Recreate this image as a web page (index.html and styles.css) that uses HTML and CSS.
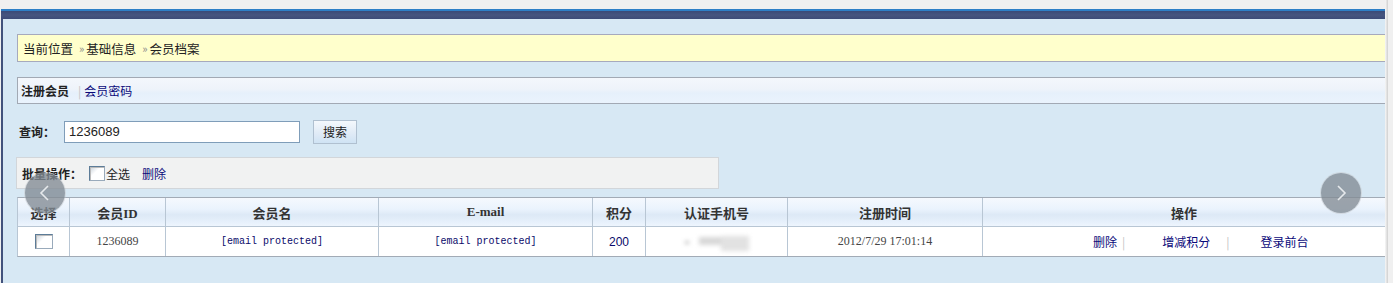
FILE: index.html
```html
<!DOCTYPE html>
<html lang="zh">
<head>
<meta charset="utf-8">
<title>会员档案</title>
<link rel="stylesheet" href="styles.css">
</head>
<body>
<div class="frame">
  <div class="topline"></div>
  <div class="topband"></div>
  <div class="main">
    <div class="crumb"><span>当前位置</span><span class="sep">»</span><span>基础信息</span><span class="sep">»</span><span>会员档案</span></div>
    <div class="tabs"><b>注册会员</b><span class="bar">|</span><a class="link">会员密码</a></div>
    <div class="search">
      <b class="lbl">查询：</b>
      <div class="input">1236089</div>
      <div class="btn">搜索</div>
    </div>
    <div class="batch">
      <b>批量操作：</b><span class="chk"></span><span class="all">全选</span><a class="link del">删除</a>
    </div>
    <div class="table">
      <div class="row head">
        <div class="c c1">选择</div>
        <div class="c c2">会员ID</div>
        <div class="c c3">会员名</div>
        <div class="c c4">E-mail</div>
        <div class="c c5">积分</div>
        <div class="c c6">认证手机号</div>
        <div class="c c7">注册时间</div>
        <div class="c c8">操作</div>
      </div>
      <div class="row body">
        <div class="c c1"><span class="chk small"></span></div>
        <div class="c c2 serif">1236089</div>
        <div class="c c3 mono">[email protected]</div>
        <div class="c c4 mono">[email protected]</div>
        <div class="c c5 num">200</div>
        <div class="c c6"><span class="blur"><i class="b1"></i><i class="b2"></i><i class="b3"></i></span></div>
        <div class="c c7 serif">2012/7/29 17:01:14</div>
        <div class="c c8 ops"><a class="link">删除</a><span class="bar">|</span><a class="link op2">增减积分</a><span class="bar b2">|</span><a class="link op3">登录前台</a></div>
      </div>
    </div>
    <div class="nav prev"><svg width="16" height="16" viewBox="0 0 16 16"><path d="M11 1 L4 8 L11 15" fill="none" stroke="#e6e9ec" stroke-width="1.6"/></svg></div>
    <div class="nav next"><svg width="16" height="16" viewBox="0 0 16 16"><path d="M5 1 L12 8 L5 15" fill="none" stroke="#e6e9ec" stroke-width="1.6"/></svg></div>
  </div>
</div>
<div class="edge"></div>
</body>
</html>
```
FILE: styles.css
```css
html, body {
  margin: 0;
  padding: 0;
  background: #f0f0f0;
  height: 283px;
  overflow: hidden;
}
body {
  position: relative;
  font-family: "Noto Sans CJK SC", "Liberation Sans", sans-serif;
  font-size: 12px;
  color: #222;
}
.frame {
  margin-top: 9px;
  margin-left: 1px;
  width: 1384px;
}
.topline {
  height: 2px;
  background: #2e7fc6;
}
.topband {
  height: 8px;
  background: linear-gradient(#3a4a78, #46557f 50%, #3c4b78);
}
.main {
  position: relative;
  height: 264px;
  border-left: 2px solid #42527c;
  background: #d7e8f4;
  padding: 15px 0 0 14px;
  box-sizing: border-box;
}
.crumb {
  height: 26px;
  border: 1px solid #a6a9bd;
  border-right: none;
  background: #ffffcc;
  display: flex;
  align-items: center;
  padding-left: 5px;
  font-size: 12.5px;
  color: #222;
}
.sep {
  color: #888;
  font-size: 11px;
  margin: 0 2px 0 6px;
}
.tabs {
  margin-top: 15px;
  height: 25px;
  border: 1px solid #a2a9b4;
  border-right: none;
  background: linear-gradient(#f4f7fc 0%, #eef3fa 45%, #e6f0fb 60%, #eaf3fd 100%);
  display: flex;
  align-items: center;
  padding-left: 3px;
}
.tabs b { color: #222; }
.tabs .bar {
  color: #c4c4c4;
  margin: 0 3px 0 9px;
}
.link {
  color: #0a0a7a;
  text-decoration: none;
}
.search {
  margin-top: 16px;
  display: flex;
  align-items: center;
  height: 23px;
}
.lbl {
  margin-left: 2px;
  width: 45px;
  color: #222;
}
.input {
  width: 230px;
  height: 20px;
  border: 1px solid #7f9db9;
  background: #fff;
  font-family: "Liberation Sans", sans-serif;
  font-size: 13px;
  line-height: 20px;
  padding-left: 4px;
  color: #222;
}
.btn {
  margin-left: 13px;
  width: 42px;
  height: 22px;
  border: 1px solid #b0c0d0;
  background: linear-gradient(#f4f8fc, #dfeaf6 60%, #cfe3f4);
  display: flex;
  align-items: center;
  justify-content: center;
  color: #222;
}
.batch {
  margin-top: 14px;
  margin-left: -1px;
  width: 696px;
  height: 30px;
  border: 1px solid #d2d6da;
  background: #f1f2f2;
  display: flex;
  align-items: center;
  padding-left: 5px;
}
.batch b { color: #222; }
.chk {
  display: inline-block;
  width: 14px;
  height: 13px;
  border: 1px solid #5c7c98;
  border-right-color: #9ab;
  border-bottom-color: #9ab;
  background: linear-gradient(135deg, #c8d0d8 0, #fff 40%);
  box-shadow: inset 1px 1px 0 #bbb;
  margin-left: 7px;
}
.all { margin-left: 1px; }
.del { margin-left: 12px; }
.table {
  margin-top: 8px;
  border-top: 1px solid #a2abb6;
  border-bottom: 1px solid #a2abb6;
  border-left: 1px solid #b8c6d4;
}
.row {
  display: flex;
}
.row.head {
  height: 28px;
  background: linear-gradient(#f5f9fe 0%, #eaf3fd 40%, #dde9f6 60%, #e6f0fb 85%, #eef5fd 100%);
  border-bottom: 1px solid #b8c6d4;
  font-weight: bold;
  font-family: "Liberation Serif", "Noto Sans CJK SC", serif;
  font-size: 13px;
  color: #333;
}
.row.body {
  height: 29px;
  background: #fff;
}
.c {
  display: flex;
  align-items: center;
  justify-content: center;
  border-right: 1px solid #b8c6d4;
  box-sizing: border-box;
}
.c1 { width: 52px; }
.c2 { width: 96px; }
.c3 { width: 213px; }
.c4 { width: 214px; }
.c5 { width: 53px; }
.c6 { width: 142px; }
.c7 { width: 195px; }
.c8 { flex: 1; border-right: none; }
.chk.small {
  margin: 0;
  width: 16px;
  height: 13px;
}
.serif {
  font-family: "Liberation Serif", serif;
  font-size: 12px;
  color: #444;
}
.mono {
  font-family: "Liberation Mono", monospace;
  font-size: 10px;
  color: #0a0a6a;
}
.num {
  font-family: "Liberation Sans", sans-serif;
  font-size: 12px;
  color: #0a0a6a;
}
.blur {
  position: relative;
  width: 84px;
  height: 22px;
  filter: blur(2px);
}
.blur i {
  position: absolute;
}
.blur .b1 { left: 10px; top: 10px; width: 4px; height: 3px; background: #bdbdbd; }
.blur .b2 { left: 24px; top: 6px; width: 24px; height: 8px; background: #d8d8d8; }
.blur .b3 { left: 46px; top: 5px; width: 28px; height: 15px; background: #e2e2e2; }
.ops {
  justify-content: flex-start;
  padding-left: 110px;
}
.ops .bar { color: #c4c4c4; margin: 0 0 0 5px; }
.op2 { margin-left: 37px; }
.ops .b2 { margin-left: 16px; }
.op3 { margin-left: 31px; }
.nav {
  position: absolute;
  top: 154px;
  width: 40px;
  height: 40px;
  border-radius: 50%;
  background: rgba(130, 138, 148, 0.78);
  box-shadow: 0 0 0 1px rgba(200, 205, 210, 0.6);
  display: flex;
  align-items: center;
  justify-content: center;
}
.prev { left: 22px; }
.next { left: 1318px; }
.edge {
  position: absolute;
  top: 0;
  left: 1385px;
  width: 3px;
  height: 283px;
  background: linear-gradient(90deg, #f8f8f8, #cfcfcf);
}
```
